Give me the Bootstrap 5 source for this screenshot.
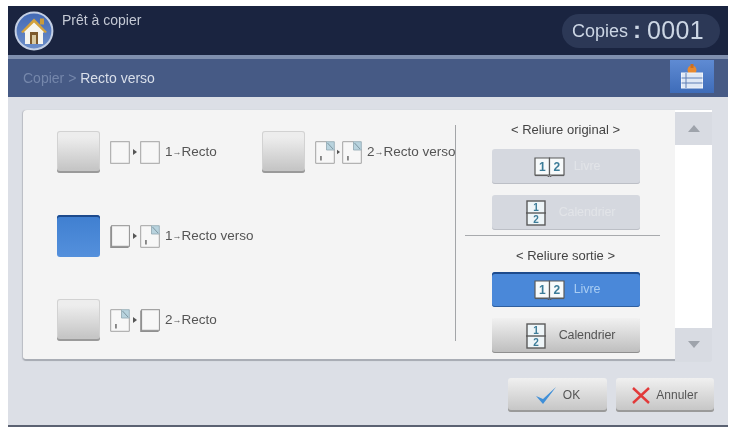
<!DOCTYPE html>
<html lang="fr">
<head>
<meta charset="utf-8">
<title>Recto verso</title>
<link href="https://cdn.jsdelivr.net/npm/bootstrap@5.3.0/dist/css/bootstrap.min.css" rel="stylesheet">
<style>
html,body{background:#fff;margin:0;height:429px;overflow:hidden}
body{font-family:"Liberation Sans",Arial,sans-serif;color:#555}
.screen{margin:6px 6px 0 8px;width:720px;height:421px;background:#dcdfe6;border-bottom:2px solid #5b6272;filter:blur(.5px)}
.topbar{height:49px;background:#1a2440;padding:5px 8px 0 6px}
.home{width:40px;height:40px;flex:none}
.status{font-size:14px;color:#c4c9d4;margin:0 0 0 8px;line-height:18px}
.pill{width:158px;height:34px;margin-top:3px;border-radius:17px;background:#2c3856;color:#ccd6e4;padding-left:10px;font-size:18px;white-space:nowrap;display:flex;align-items:center}
.pill .sep{font-size:24px;font-weight:700;margin:-3px 6px 0 5px}
.pill .num{font-size:25px;letter-spacing:.3px}
.crumbbar{height:42px;background:#465a85;border-top:4px solid #7f8fae;padding:1px 14px 0 15px}
.crumb{font-size:14px;color:#d9dfea;line-height:36px}
.crumb .dim{color:#7587ab}
.tool{width:44px;height:33px;padding:0;border:0;border-radius:0;background:linear-gradient(#5f8bd3,#3e6cb9)}
.tool:hover{background:linear-gradient(#5f8bd3,#3e6cb9)}
.stage{padding:13px 16px 0 15px}
.sheet{height:251px;background:#f4f4f4;border-radius:4px 0 0 4px;border-bottom:2px solid #a9adb5;box-shadow:-1px 0 1px #b9bcc3}
.opts{width:435px;flex:none;overflow:hidden;padding:21px 0 0 34px;display:grid;grid-template-columns:205px 1fr;grid-template-rows:42px 42px 42px;row-gap:42px;height:248px;align-content:start}
.opt{display:flex;align-items:center;white-space:nowrap;font-size:13.5px;color:#555}
.sq{width:43px;height:42px;flex:none;padding:0;margin-right:10px;border:0;border-radius:3px;background:linear-gradient(#ededed 15%,#c6c6c6 90%);box-shadow:inset 0 -2px 0 #9a9a9a,inset 0 0 0 1px #d2d2d2}
.sq.on,.sq.on:hover{background:linear-gradient(#3f7fd0,#5490dc);box-shadow:inset 0 2px 0 #1d4a8c}
.pages{display:flex;align-items:center;margin-right:5px}
.lb i{font-style:normal;font-size:9px;margin:0;vertical-align:1px}
.vline{width:1px;flex:none;background:#a3a5a8;margin:15px 0 18px -3px}
.side{flex:1 1 0;padding-top:10px}
.ttl{font-size:13px;line-height:20px;color:#444;height:20px}
.ttl.a{margin-bottom:9px}
.ttl.b{margin:10px 0 6px}
.hline{height:1px;width:195px;background:#a8aaad;margin:5px 0 0 9px;align-self:flex-start}
.bind{width:148px;height:35px;padding:0;border:0;border-radius:3px;font-size:12.5px;letter-spacing:-.1px;color:#555;display:flex;align-items:center;justify-content:center;background:linear-gradient(#f1f1f1,#bdbdbd);box-shadow:inset 0 -1px 0 #8f8f8f}
.bind:hover{color:#555;background:linear-gradient(#f1f1f1,#bdbdbd)}
.bind+.bind{margin-top:11px}
.bind.off,.bind.off:disabled{background:#d5d8df;color:#e2e4e8;opacity:1;box-shadow:inset 0 -1px 0 #bcbfc6}
.bind.sel,.bind.sel:hover{background:#4a88d9;color:#a9cdf3;box-shadow:inset 0 2px 0 #1d4a8c,inset 0 -1px 0 #2f5f9f}
.bk{margin:0 9px 0 3px}
.cal{margin:0 13px 0 10px}
.track{width:37px;flex:none;background:#fff;height:251px;padding-top:2px}
.arrowbtn{width:37px;height:33px;padding:0;border:0;border-radius:0;background:#d8dbe2;display:flex;align-items:center;justify-content:center}
.arrowbtn:hover{background:#d8dbe2}
.foot{padding:17px 0 0;gap:9px;margin-right:-2px}
.act{width:99px;height:34px;padding:0;border:0;border-radius:3px;font-size:12px;color:#555;display:flex;align-items:center;justify-content:center;gap:6px;background:linear-gradient(#f0f0f0,#c4c4c4);box-shadow:inset 0 -2px 0 #9a9a9a}
.act+.act{width:98px}
.act:hover{color:#555;background:linear-gradient(#f0f0f0,#c4c4c4)}
</style>
</head>
<body>
<svg width="0" height="0" class="d-block" style="position:absolute">
  <defs>
    <symbol id="single" viewBox="0 0 20 23">
      <rect x=".7" y=".7" width="18.6" height="21.6" fill="#f7f7f7" stroke="#a3a3a3" stroke-width="1"/>
    </symbol>
    <symbol id="stack" viewBox="0 0 20 23">
      <rect x="1.6" y=".7" width="17.8" height="20.6" fill="#f7f7f7" stroke="#8f8f8f" stroke-width="1"/>
      <path d="M1 1.5V22.3H18.6" fill="none" stroke="#8f8f8f" stroke-width="1.6"/>
    </symbol>
    <symbol id="duplex" viewBox="0 0 20 23">
      <path d="M.7.7H11.5L19.3 9V22.3H.7Z" fill="#f7f7f7" stroke="#a3a3a3" stroke-width="1"/>
      <path d="M11.5.7H19.3V9H11.5Z" fill="#b8d3de" stroke="#8fa6b0" stroke-width=".8"/>
      <path d="M12.5 2L18 8" stroke="#6f8792" stroke-width=".8"/>
      <rect x="5.3" y="15" width="1.3" height="4.5" fill="#555"/>
    </symbol>
    <symbol id="tri" viewBox="0 0 4 6"><path d="M0 0L4 3L0 6Z" fill="#555"/></symbol>
    <symbol id="book" viewBox="0 0 31 20">
      <path d="M1 1H15.5V18H1Z" fill="#f7fafb" stroke="#5a5a5a" stroke-width="1.2"/>
      <path d="M15.5 1H30V18H15.5Z" fill="#f7fafb" stroke="#5a5a5a" stroke-width="1.2"/>
      <path d="M1 18.6H13L15.5 20L18 18.6H30" fill="none" stroke="#5a5a5a"/>
      <text x="8.2" y="14" font-family="Liberation Sans,sans-serif" font-size="12" font-weight="700" text-anchor="middle" fill="#3c7c98">1</text>
      <text x="22.8" y="14" font-family="Liberation Sans,sans-serif" font-size="12" font-weight="700" text-anchor="middle" fill="#3c7c98">2</text>
    </symbol>
    <symbol id="calendar" viewBox="0 0 20 26">
      <rect x="1" y="1" width="18" height="24" fill="#eef5f8" stroke="#5a5a5a" stroke-width="1.4"/>
      <path d="M0 13H20" stroke="#5a5a5a" stroke-width="1.4"/>
      <text x="10" y="11" font-family="Liberation Sans,sans-serif" font-size="10" font-weight="700" text-anchor="middle" fill="#3c7c98">1</text>
      <text x="10" y="23" font-family="Liberation Sans,sans-serif" font-size="10" font-weight="700" text-anchor="middle" fill="#3c7c98">2</text>
    </symbol>
  </defs>
</svg>

<div class="screen d-flex flex-column">
  <header class="topbar d-flex justify-content-between">
    <div class="d-flex">
      <svg class="home" viewBox="0 0 40 40">
        <defs><linearGradient id="hg" x1="0" y1="0" x2="0" y2="1"><stop offset="0" stop-color="#4269b5"/><stop offset="1" stop-color="#6c8ec9"/></linearGradient></defs>
        <circle cx="20" cy="20" r="18.4" fill="url(#hg)" stroke="#c3cfe4" stroke-width="2"/>
        <path d="M9 20L20 9.5L31 20L29 22V33H11V22Z" fill="#f6f5ef"/>
        <path d="M7 21L20 7.5L33 21L31 22L20 11.5L9 22Z" fill="#d3a23c"/>
        <rect x="26" y="7.5" width="4" height="6" fill="#c89a3c"/>
        <rect x="16" y="21" width="8" height="12" fill="#7d5a2d"/>
        <rect x="18" y="24" width="4" height="9" fill="#d8c9a2"/>
      </svg>
      <div class="status">Prêt à copier</div>
    </div>
    <div class="pill">Copies<span class="sep">:</span><span class="num">0001</span></div>
  </header>

  <div class="crumbbar d-flex justify-content-between align-items-start">
    <div class="crumb"><span class="dim">Copier &gt;</span> Recto verso</div>
    <button class="btn tool d-flex align-items-center justify-content-center" type="button" aria-label="Options">
      <svg width="24" height="26" viewBox="0 0 24 26">
        <circle cx="12" cy="6" r="4.5" fill="#e8892e"/>
        <rect x="10.5" y="0" width="3" height="4" fill="#c96f22"/>
        <rect x="1.5" y="9" width="21" height="15" fill="#dfe8f5" stroke="#f2f5fa"/>
        <path d="M1.5 14H22.5M1.5 19H22.5M6 9V24" stroke="#5f7fb5" stroke-width="1"/>
      </svg>
    </button>
  </div>

  <main class="stage flex-grow-1">
    <div class="sheet d-flex">
      <div class="d-flex flex-grow-1">
        <div class="opts">
          <div class="opt">
            <button class="btn sq" type="button" aria-label="1 Recto"></button>
            <span class="pages">
              <svg width="20" height="23"><use href="#single"/></svg>
              <svg width="4" height="6" style="margin:0 3px"><use href="#tri"/></svg>
              <svg width="20" height="23"><use href="#single"/></svg>
            </span>
            <span class="lb">1<i>→</i>Recto</span>
          </div>
          <div class="opt">
            <button class="btn sq" type="button" aria-label="2 Recto verso"></button>
            <span class="pages">
              <svg width="20" height="23"><use href="#duplex"/></svg>
              <svg width="3" height="6" style="margin:0 2px"><use href="#tri"/></svg>
              <svg width="20" height="23"><use href="#duplex"/></svg>
            </span>
            <span class="lb">2<i>→</i>Recto verso</span>
          </div>
          <div class="opt">
            <button class="btn sq on" type="button" aria-label="1 Recto verso"></button>
            <span class="pages">
              <svg width="20" height="23"><use href="#stack"/></svg>
              <svg width="4" height="6" style="margin:0 3px"><use href="#tri"/></svg>
              <svg width="20" height="23"><use href="#duplex"/></svg>
            </span>
            <span class="lb">1<i>→</i>Recto verso</span>
          </div>
          <div></div>
          <div class="opt">
            <button class="btn sq" type="button" aria-label="2 Recto"></button>
            <span class="pages">
              <svg width="20" height="23"><use href="#duplex"/></svg>
              <svg width="4" height="6" style="margin:0 3px"><use href="#tri"/></svg>
              <svg width="20" height="23"><use href="#stack"/></svg>
            </span>
            <span class="lb">2<i>→</i>Recto</span>
          </div>
        </div>
        <div class="vline"></div>
        <section class="side d-flex flex-column align-items-center">
          <div class="ttl a">&lt; Reliure original &gt;</div>
          <button class="btn bind off" type="button" disabled><svg class="bk" width="31" height="20"><use href="#book"/></svg>Livre</button>
          <button class="btn bind off" type="button" disabled><svg class="cal" width="20" height="26"><use href="#calendar"/></svg>Calendrier</button>
          <div class="hline"></div>
          <div class="ttl b">&lt; Reliure sortie &gt;</div>
          <button class="btn bind sel" type="button"><svg class="bk" width="31" height="20"><use href="#book"/></svg>Livre</button>
          <button class="btn bind" type="button"><svg class="cal" width="20" height="26"><use href="#calendar"/></svg>Calendrier</button>
        </section>
      </div>
      <div class="track d-flex flex-column justify-content-between">
        <button class="btn arrowbtn" type="button" aria-label="Haut"><svg width="12" height="7"><path d="M6 0L12 7H0Z" fill="#9ea3ab"/></svg></button>
        <button class="btn arrowbtn" type="button" aria-label="Bas"><svg width="12" height="7"><path d="M0 0H12L6 7Z" fill="#9ea3ab"/></svg></button>
      </div>
    </div>
    <footer class="foot d-flex justify-content-end">
      <button class="btn act" type="button">
        <svg width="22" height="19" viewBox="0 0 22 19"><path d="M1 10L8 18L21 1L8 13Z" fill="#3f8fd8"/></svg>OK
      </button>
      <button class="btn act" type="button">
        <svg width="18" height="17" viewBox="0 0 18 17"><path d="M1 1L17 16M17 1L1 16" stroke="#e23a3a" stroke-width="2.4"/></svg>Annuler
      </button>
    </footer>
  </main>
</div>
</body>
</html>
